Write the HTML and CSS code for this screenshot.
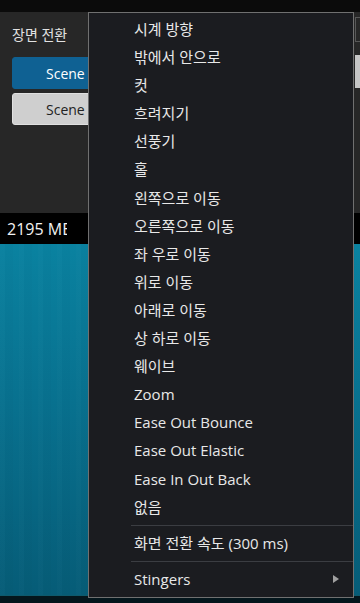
FILE: index.html
```html
<!DOCTYPE html>
<html lang="ko">
<head>
<meta charset="UTF-8">
<meta name="viewport" content="width=device-width, initial-scale=1.0">
<link rel="stylesheet" href="styles.css">
</head>
<body>

<div class="app">
  <div class="topbar"></div>

  <!-- scene transitions dock -->
  <div class="dock">
    <div class="dock-main">
      <div class="dock-title">장면 전환</div>
      <button type="button" class="scene-button active">Scene</button>
      <button type="button" class="scene-button">Scene - 2</button>
    </div>
    <div class="dock-side">
      <div class="side-box"></div>
      <div class="side-selected"></div>
    </div>
  </div>

  <div class="statusbar">
    <span class="status-mem">2195 MB</span>
  </div>

  <div class="preview"></div>
  <div class="bottombar"></div>
</div>

<!-- context menu -->
<div class="menu">
  <div class="menu-item">시계 방향</div>
  <div class="menu-item">밖에서 안으로</div>
  <div class="menu-item">컷</div>
  <div class="menu-item">흐려지기</div>
  <div class="menu-item">선풍기</div>
  <div class="menu-item">홀</div>
  <div class="menu-item">왼쪽으로 이동</div>
  <div class="menu-item">오른쪽으로 이동</div>
  <div class="menu-item">좌 우로 이동</div>
  <div class="menu-item">위로 이동</div>
  <div class="menu-item">아래로 이동</div>
  <div class="menu-item">상 하로 이동</div>
  <div class="menu-item">웨이브</div>
  <div class="menu-item">Zoom</div>
  <div class="menu-item">Ease Out Bounce</div>
  <div class="menu-item">Ease Out Elastic</div>
  <div class="menu-item">Ease In Out Back</div>
  <div class="menu-item">없음</div>
  <div class="menu-separator"></div>
  <div class="menu-item">화면 전환 속도 (300 ms)</div>
  <div class="menu-separator"></div>
  <div class="menu-item has-sub">Stingers <span class="sub-arrow"></span></div>
</div>

</body>
</html>
```

FILE: styles.css
```css
body {
  margin: 0;
  padding: 0;
  width: 360px;
  height: 603px;
  overflow: hidden;
  background-color: #000;
  font-family: "Open Sans", "Noto Sans CJK KR", sans-serif;
  color: #e6e6e6;
  position: relative;
}
.app {
  display: flex;
  flex-direction: column;
  height: 603px;
}
.topbar {
  height: 12px;
  background-color: #0b0b0b;
}
.dock {
  height: 201px;
  display: flex;
  background-color: #272727;
}
.dock-main {
  flex: 1;
  padding: 0 0 0 12px;
}
.dock-title {
  font-size: 14px;
  line-height: 20px;
  margin-top: 13px;
  color: #e2e2e2;
}
.scene-button {
  display: block;
  width: 320px;
  height: 32px;
  margin-top: 4px;
  padding: 0 0 0 33px;
  text-align: left;
  font-family: "Open Sans", "Noto Sans CJK KR", sans-serif;
  font-size: 14px;
  color: #222;
  background-color: #cfcfcf;
  border: 1px solid #e0e0e0;
  border-radius: 3px;
}
.scene-button.active {
  margin-top: 12px;
  color: #fff;
  background-color: #0f6193;
  border-color: #0f6193;
}
.dock-side {
  width: 5px;
  padding-top: 5px;
}
.side-box {
  height: 23px;
  border: 1px solid #585858;
  border-right: none;
}
.side-selected {
  margin-top: 13px;
  height: 33px;
  background-color: #c6c6c6;
}
.statusbar {
  height: 31px;
  background-color: #000;
  display: flex;
  align-items: center;
}
.status-mem {
  display: block;
  width: 60px;
  padding-left: 7px;
  overflow: hidden;
  white-space: nowrap;
  font-size: 16px;
  color: #f2f2f2;
}
.preview {
  height: 351px;
  background-color: #087594;
  background-image:
    repeating-linear-gradient(90deg, rgba(255, 255, 255, 0.012) 0 5px, rgba(0, 0, 0, 0.015) 5px 13px, rgba(255, 255, 255, 0) 13px 19px),
    linear-gradient(180deg, #0a82a0 0%, #08718f 45%, #065c77 100%);
}
.bottombar {
  flex: 1;
  background-color: #04161c;
  border-top: 1px solid #0e5a6c;
}

/* context menu */
.menu {
  position: absolute;
  left: 88px;
  top: 12px;
  width: 264px;
  height: 582px;
  padding-top: 2px;
  background-color: #1b1c20;
  border: 1px solid #707070;
  box-sizing: content-box;
}
.menu-item {
  height: 28.1px;
  line-height: 28px;
  padding-left: 45px;
  font-size: 15px;
  color: #e8e8e8;
  white-space: nowrap;
  position: relative;
}
.menu-separator {
  height: 1px;
  margin: 4px 0 3px 42px;
  background-color: #3b3d42;
}
.sub-arrow {
  position: absolute;
  right: 14px;
  top: 10px;
  width: 0;
  height: 0;
  border-top: 4px solid transparent;
  border-bottom: 4px solid transparent;
  border-left: 6px solid #a0a0a0;
}
```
